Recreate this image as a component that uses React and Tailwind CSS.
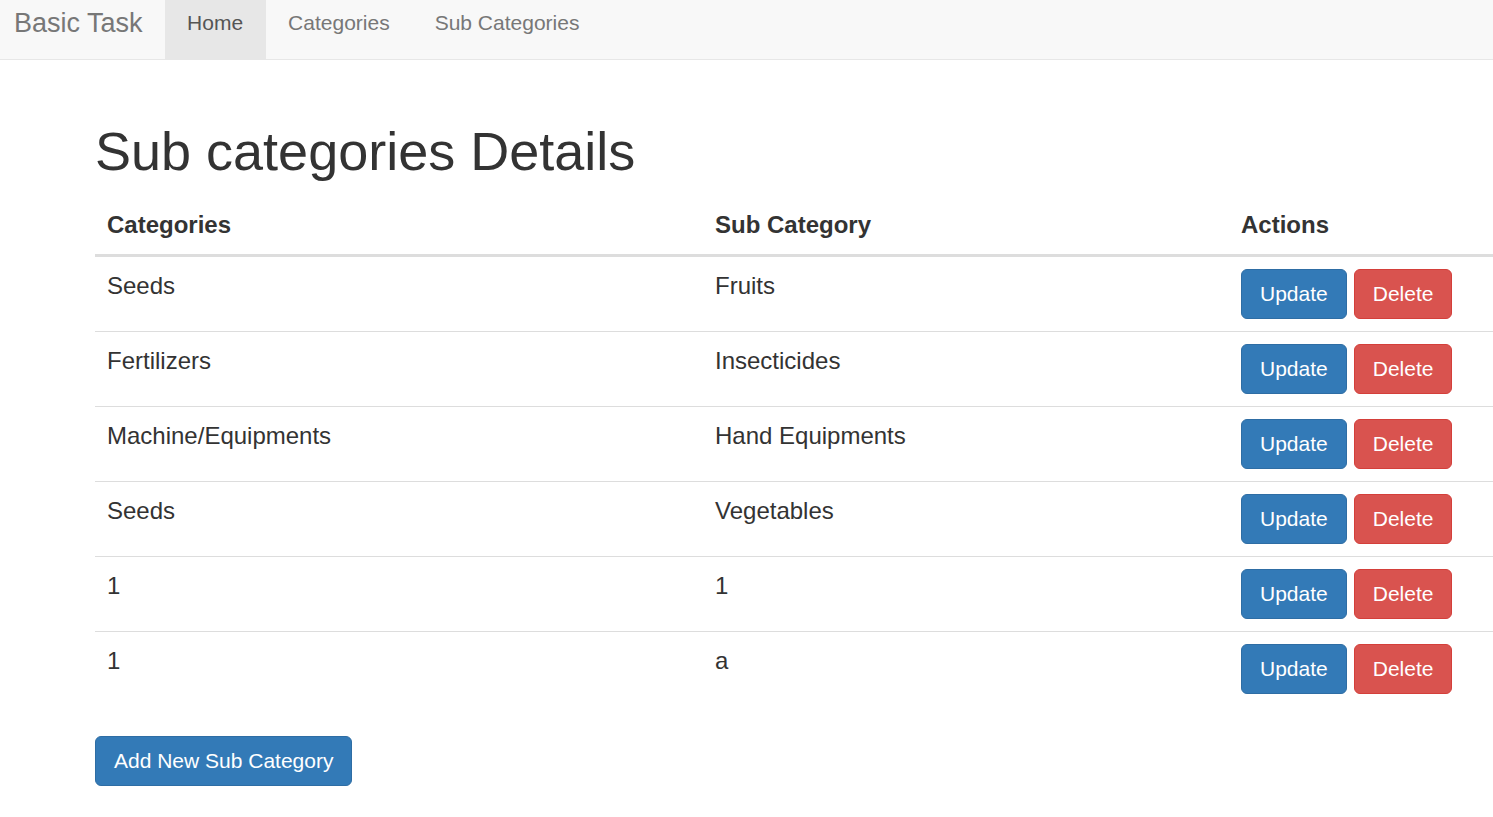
import React from 'react'

const rows = [
  ['Seeds', 'Fruits'],
  ['Fertilizers', 'Insecticides'],
  ['Machine/Equipments', 'Hand Equipments'],
  ['Seeds', 'Vegetables'],
  ['1', '1'],
  ['1', 'a'],
]

export default function App() {
  return (
    <div className="min-h-screen overflow-hidden bg-white text-[#333] text-[21px] leading-[30px]" style={{ fontFamily: '"Liberation Sans", Arial, sans-serif' }}>
      <nav className="h-[60px] bg-[#f8f8f8] border-b border-[#e7e7e7] flex">
        <a className="pl-[14px] pr-[22px] pt-[8px] text-[27px] leading-[30px] text-[#777]">Basic Task</a>
        <a className="px-[22.5px] pt-[8px] h-[59px] bg-[#e7e7e7] text-[#555]">Home</a>
        <a className="px-[22.5px] pt-[8px] text-[#777]">Categories</a>
        <a className="px-[22.5px] pt-[8px] text-[#777]">Sub Categories</a>
      </nav>

      <div className="pl-[95px]">
        <h1 className="mt-[62px] mb-[15px] text-[54px] leading-[59px] font-normal">Sub categories Details</h1>

        <table className="w-[1398px] table-fixed border-collapse text-left text-[24px] leading-[34px]">
          <thead>
            <tr className="border-b-[3px] border-[#ddd]">
              <th className="w-[608px] p-[12px] font-bold">Categories</th>
              <th className="w-[526px] p-[12px] font-bold">Sub Category</th>
              <th className="p-[12px] font-bold">Actions</th>
            </tr>
          </thead>
          <tbody>
            {rows.map(([cat, sub], i) => (
              <tr key={i} className={i > 0 ? 'border-t border-[#ddd]' : ''}>
                <td className="p-[12px] align-top">{cat}</td>
                <td className="p-[12px] align-top">{sub}</td>
                <td className="p-[12px] align-top">
                  <div className="flex gap-[7px] text-[21px] leading-[30px]">
                    <button className="h-[50px] px-[18px] rounded-[6px] bg-[#337ab7] border border-[#2e6da4] text-white">Update</button>
                    <button className="h-[50px] px-[18px] rounded-[6px] bg-[#d9534f] border border-[#d43f3a] text-white">Delete</button>
                  </div>
                </td>
              </tr>
            ))}
          </tbody>
        </table>

        <button className="mt-[30px] h-[50px] px-[18px] rounded-[6px] bg-[#337ab7] border border-[#2e6da4] text-white">
          Add New Sub Category
        </button>
      </div>
    </div>
  )
}
